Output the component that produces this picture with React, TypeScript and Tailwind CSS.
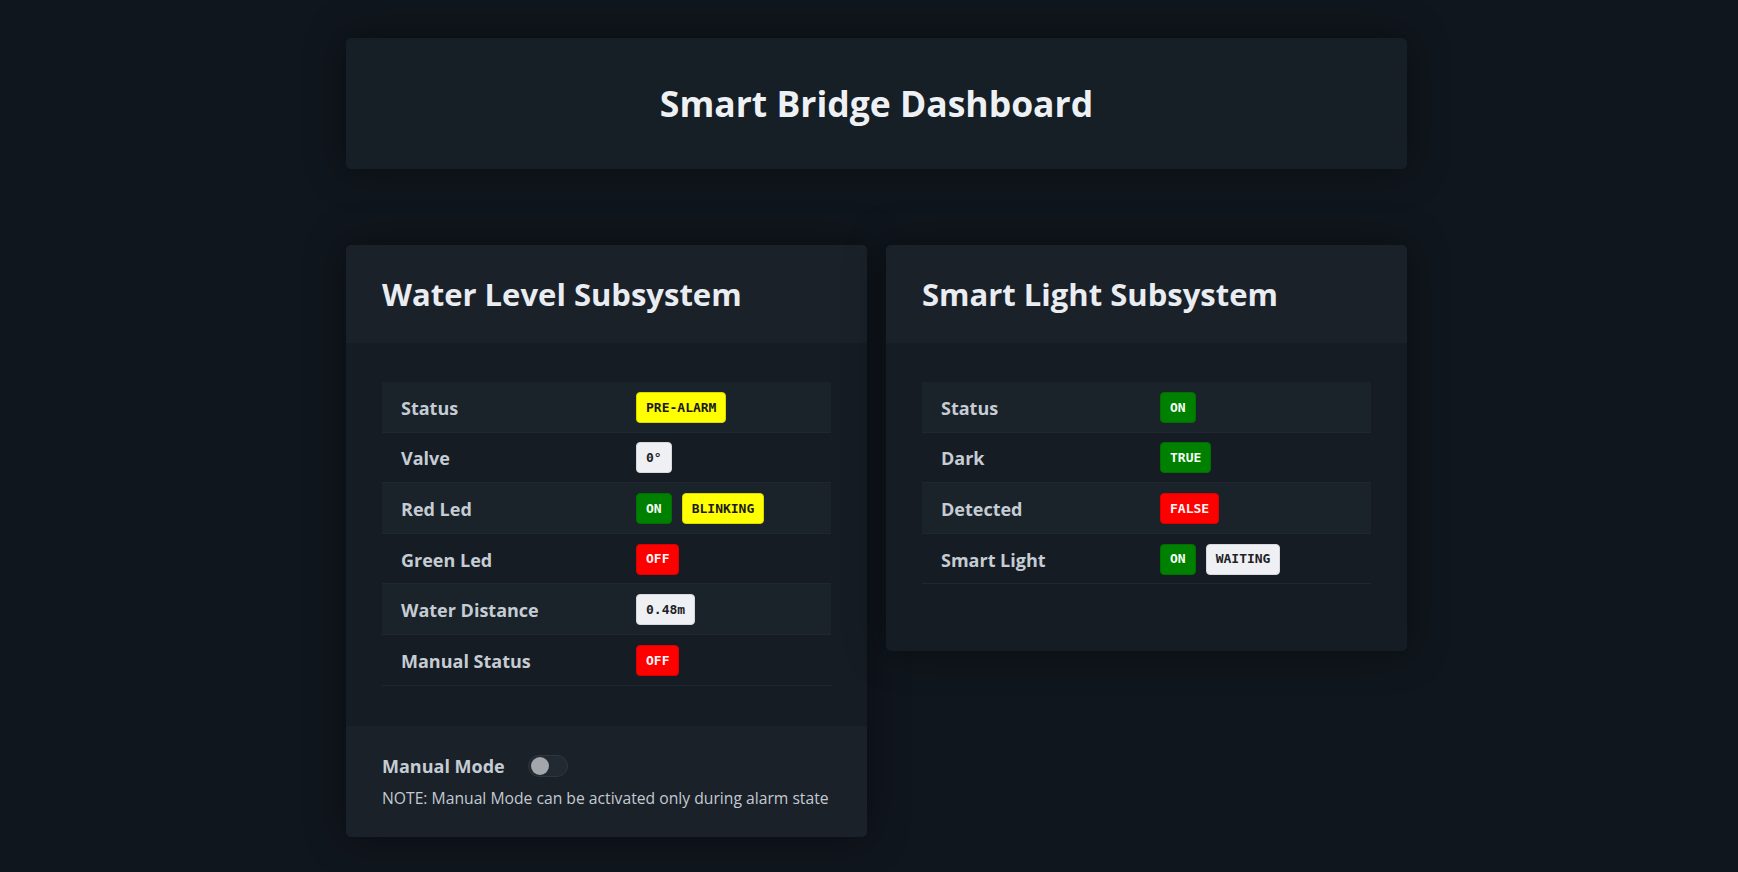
import React from "react";

type BadgeKind = "yellow" | "white" | "green" | "red";

const badgeClass: Record<BadgeKind, string> = {
  yellow: "bg-[#ffff00] text-[#1a1a1a] border-[#d9d900]",
  white: "bg-[#eef0f3] text-[#1e2226] border-[#d5d8dc]",
  green: "bg-[#008000] text-[#f4fff4] border-[#006e00]",
  red: "bg-[#ff0000] text-[#fff4f4] border-[#dd0000]",
};

function Badge({ kind, children }: { kind: BadgeKind; children: React.ReactNode }) {
  return (
    <span
      className={`inline-flex h-[31px] items-center rounded-[4px] border px-[9px] text-[13px] font-bold ${badgeClass[kind]}`}
      style={{ fontFamily: '"DejaVu Sans Mono", "Liberation Mono", monospace' }}
    >
      {children}
    </span>
  );
}

type Row = { label: string; badges: { kind: BadgeKind; text: string }[] };

function Table({ rows, labelWidth }: { rows: Row[]; labelWidth: string }) {
  return (
    <div className="flex flex-col">
      {rows.map((r, i) => (
        <div
          key={r.label}
          className={`flex h-[50.6px] items-center border-b border-[#1f2831] ${i % 2 === 0 ? "bg-[#1a222a]" : "bg-transparent"}`}
        >
          <div className={`${labelWidth} pl-[19px] pt-[3px] text-[18px] font-bold text-[#c5ccd3]`}>{r.label}</div>
          <div className="flex items-center gap-[10px] pt-[1px]">
            {r.badges.map((b, j) => (
              <Badge key={j} kind={b.kind}>
                {b.text}
              </Badge>
            ))}
          </div>
        </div>
      ))}
    </div>
  );
}

function CardTitle({ children }: { children: React.ReactNode }) {
  return (
    <div className="flex h-[98px] items-center bg-[#1a2129] px-[36px]">
      <h2 className="text-[31px] font-bold leading-none text-[#e9edf1]">{children}</h2>
    </div>
  );
}

export default function App() {
  const water: Row[] = [
    { label: "Status", badges: [{ kind: "yellow", text: "PRE-ALARM" }] },
    { label: "Valve", badges: [{ kind: "white", text: "0°" }] },
    {
      label: "Red Led",
      badges: [
        { kind: "green", text: "ON" },
        { kind: "yellow", text: "BLINKING" },
      ],
    },
    { label: "Green Led", badges: [{ kind: "red", text: "OFF" }] },
    { label: "Water Distance", badges: [{ kind: "white", text: "0.48m" }] },
    { label: "Manual Status", badges: [{ kind: "red", text: "OFF" }] },
  ];
  const light: Row[] = [
    { label: "Status", badges: [{ kind: "green", text: "ON" }] },
    { label: "Dark", badges: [{ kind: "green", text: "TRUE" }] },
    { label: "Detected", badges: [{ kind: "red", text: "FALSE" }] },
    {
      label: "Smart Light",
      badges: [
        { kind: "green", text: "ON" },
        { kind: "white", text: "WAITING" },
      ],
    },
  ];

  return (
    <div
      className="min-h-[872px] w-full bg-[#10161d] pt-[38px]"
      style={{ fontFamily: '"Open Sans", "Noto Sans", sans-serif' }}
    >
      <div className="ml-[346px] flex w-[1061px] flex-col">
        <div className="flex h-[131px] items-center justify-center rounded-[5px] bg-[#161e26] shadow-[0_0_40px_rgba(0,0,0,0.4)]">
          <h1 className="text-[35.5px] font-bold leading-none text-[#eef1f4]">Smart Bridge Dashboard</h1>
        </div>

        <div className="mt-[76px] grid grid-cols-2 items-start gap-[19px]">
          <div className="overflow-hidden rounded-[5px] bg-[#151c23] shadow-[0_0_40px_rgba(0,0,0,0.4)]">
            <CardTitle>Water Level Subsystem</CardTitle>
            <div className="px-[36px] pb-[40px] pt-[39px]">
              <Table rows={water} labelWidth="w-[254px]" />
            </div>
            <div className="bg-[#1a2129] px-[36px] pb-[27px] pt-[29px]">
              <div className="flex h-[23px] items-center gap-[23px]">
                <span className="text-[18px] font-bold text-[#c5ccd3]">Manual Mode</span>
                <span className="relative inline-block h-[22px] w-[40px] rounded-full border border-[#2d3741] bg-[#212a33]">
                  <span className="absolute left-[2px] top-[1px] h-[18px] w-[18px] rounded-full bg-[#a3a6aa]" />
                </span>
              </div>
              <p className="mt-[8px] text-[15.7px] leading-[24px] text-[#c3cad1]">
                NOTE: Manual Mode can be activated only during alarm state
              </p>
            </div>
          </div>

          <div className="overflow-hidden rounded-[5px] bg-[#151c23] shadow-[0_0_40px_rgba(0,0,0,0.4)]">
            <CardTitle>Smart Light Subsystem</CardTitle>
            <div className="px-[36px] pb-[67px] pt-[39px]">
              <Table rows={light} labelWidth="w-[238px]" />
            </div>
          </div>
        </div>
      </div>
    </div>
  );
}
